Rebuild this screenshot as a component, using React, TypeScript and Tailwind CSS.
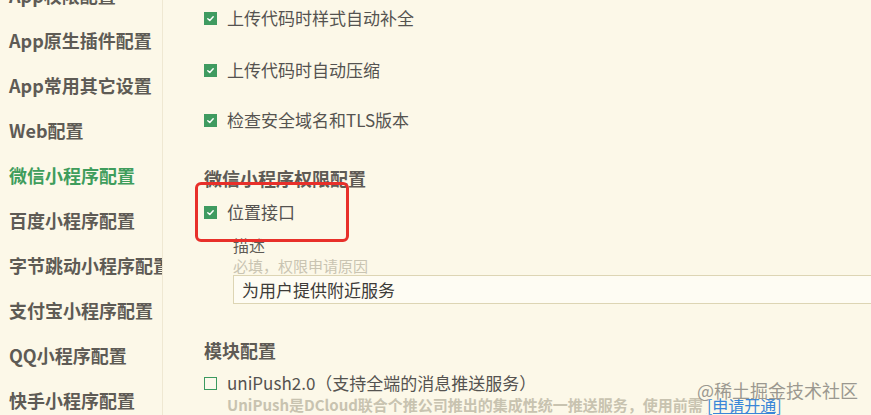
import React from "react";

const font = { fontFamily: '"Noto Sans CJK SC", "Noto Sans", sans-serif' };

function Check({ checked = true }: { checked?: boolean }) {
  if (!checked) {
    return <span className="w-[13px] h-[13px] border border-[#3c9a5f] bg-[#fdf9ec] shrink-0" />;
  }
  return (
    <span className="w-[13px] h-[13px] bg-[#3f9b60] flex items-center justify-center shrink-0">
      <svg width="9" height="9" viewBox="0 0 10 10">
        <path d="M2 5.2 L4.2 7.2 L8 3" stroke="#fff" strokeWidth="1.6" fill="none" strokeLinecap="round" strokeLinejoin="round" />
      </svg>
    </span>
  );
}

const items = [
  "App权限配置",
  "App原生插件配置",
  "App常用其它设置",
  "Web配置",
  "微信小程序配置",
  "百度小程序配置",
  "字节跳动小程序配置",
  "支付宝小程序配置",
  "QQ小程序配置",
  "快手小程序配置",
];

export default function App() {
  return (
    <div className="relative w-[871px] h-[415px] overflow-hidden bg-[#fcf8e8] flex" style={font}>
      <div className="w-[163px] shrink-0 border-r border-[#efe8d2] overflow-hidden">
        <div className="flex flex-col mt-[-27px]">
          {items.map((t, i) => (
            <div
              key={t}
              className={`h-[45px] flex items-center pl-[9px] text-[18px] font-bold whitespace-nowrap ${
                i === 4 ? "text-[#3f9d5c]" : "text-[#5e5b55]"
              }`}
            >
              {t}
            </div>
          ))}
        </div>
      </div>

      <div className="flex-1 pl-[41px] pt-[6px] flex flex-col text-[#555350] text-[17px]">
        <div className="h-[24px] flex items-center gap-[10px]">
          <Check />
          <span>上传代码时样式自动补全</span>
        </div>
        <div className="h-[24px] mt-[28px] flex items-center gap-[10px]">
          <Check />
          <span>上传代码时自动压缩</span>
        </div>
        <div className="h-[24px] mt-[26px] flex items-center gap-[10px]">
          <Check />
          <span>检查安全域名和TLS版本</span>
        </div>
        <div className="h-[24px] mt-[34px] flex items-center text-[18px] font-bold text-[#5e5b55]">
          微信小程序权限配置
        </div>
        <div className="h-[24px] mt-[10px] flex items-center gap-[10px]">
          <Check />
          <span>位置接口</span>
        </div>
        <div className="pl-[29px] flex flex-col">
          <div className="h-[22px] mt-[10px] flex items-center text-[16px] text-[#5e5b55]">描述</div>
          <div className="h-[18px] mt-[1px] flex items-center text-[15px] text-[#c9c4b2]">必填，权限申请原因</div>
          <div className="h-[29px] w-[700px] border border-[#ddd5b4] bg-[#fefcf3] flex items-center pl-[8px] text-[17px] text-[#3d3b38]">
            为用户提供附近服务
          </div>
        </div>
        <div className="h-[24px] mt-[34px] flex items-center text-[18px] font-bold text-[#5e5b55]">
          模块配置
        </div>
        <div className="h-[24px] mt-[9px] flex items-center gap-[10px]">
          <Check checked={false} />
          <span>uniPush2.0（支持全端的消息推送服务）</span>
        </div>
        <div className="h-[20px] pl-[23px] flex items-center text-[15px] font-bold text-[#c8c3b0] whitespace-nowrap">
          UniPush是DCloud联合个推公司推出的集成性统一推送服务，使用前需
          <span className="ml-[4px] text-[16px] font-normal text-[#3a86d8] underline">[申请开通]</span>
        </div>
      </div>

      <div className="absolute left-[195px] top-[182px] w-[154px] h-[60px] border-[3px] border-[#e8302a] rounded-[6px]" />
      <div className="absolute left-[697px] top-[377px] text-[18px] text-[#9b9890] whitespace-nowrap">
        @稀土掘金技术社区
      </div>
    </div>
  );
}
